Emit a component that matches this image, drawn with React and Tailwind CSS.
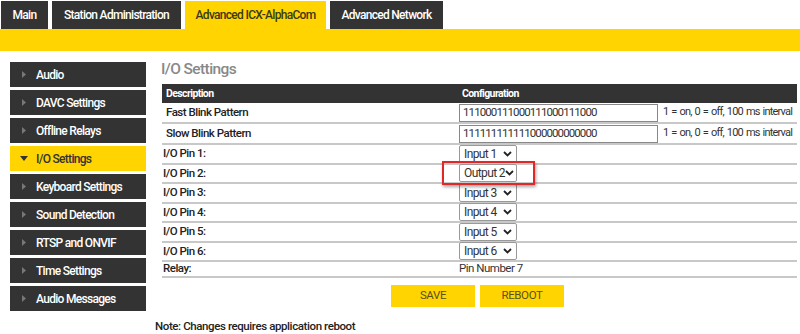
import React from "react";

const tabs = [
  { label: "Main", w: "w-[47px]" },
  { label: "Station Administration", w: "w-[129px]" },
  { label: "Advanced ICX-AlphaCom", w: "w-[141px]", active: true },
  { label: "Advanced Network", w: "w-[113px]" },
];

const side = [
  "Audio",
  "DAVC Settings",
  "Offline Relays",
  "I/O Settings",
  "Keyboard Settings",
  "Sound Detection",
  "RTSP and ONVIF",
  "Time Settings",
  "Audio Messages",
];

function Chevron() {
  return (
    <svg width="9" height="6" viewBox="0 0 9 6" className="ml-auto shrink-0">
      <path d="M1 1 L4.5 4.5 L8 1" fill="none" stroke="#222" strokeWidth="1.8" />
    </svg>
  );
}

function Select({ value, highlight }) {
  const box = (
    <div className="flex items-center w-[58px] h-[18px] border border-[#999] rounded-[2px] bg-white pl-[4px] pr-[4px] text-[12px] tracking-[-0.6px] text-[#333] leading-none whitespace-nowrap">
      <span>{value}</span>
      <Chevron />
    </div>
  );
  if (!highlight) return box;
  return (
    <div className="relative">
      {box}
      <div className="absolute left-[-17px] top-[-3px] w-[93px] h-[24px] border-2 border-[#e02828] shadow-[1px_2px_3px_rgba(0,0,0,0.35)]" />
    </div>
  );
}

export default function App() {
  const pins = ["Input 1", "Output 2", "Input 3", "Input 4", "Input 5", "Input 6"];
  return (
    <div
      className="w-[800px] h-[334px] bg-white overflow-hidden"
      style={{ fontFamily: "Roboto, 'Liberation Sans', sans-serif" }}
    >
      <div className="flex gap-[4px] pl-[1px] pt-[1px] h-[29px]">
        {tabs.map((t) => (
          <div
            key={t.label}
            className={`${t.w} h-[28px] flex items-center justify-center text-[12px] tracking-[-0.7px] font-medium whitespace-nowrap ${
              t.active ? "bg-[#ffd400] text-[#3a3a1a]" : "bg-[#333333] text-white"
            }`}
          >
            {t.label}
          </div>
        ))}
      </div>
      <div className="h-[22px] bg-[#ffd400]" />
      <div className="flex">
        <div className="ml-[10px] mt-[11px] w-[136px] shrink-0 flex flex-col gap-[3px]">
          {side.map((s) => {
            const active = s === "I/O Settings";
            return (
              <div
                key={s}
                className={`h-[25px] flex items-center text-[12px] tracking-[-0.7px] font-medium whitespace-nowrap ${
                  active ? "bg-[#ffd400] text-[#333]" : "bg-[#333333] text-white"
                }`}
              >
                <span className="w-[26px] flex justify-center pl-[2px]">
                  {active ? (
                    <svg width="8" height="5" viewBox="0 0 8 5">
                      <path d="M0 0 L8 0 L4 5 Z" fill="#333" />
                    </svg>
                  ) : (
                    <svg width="4" height="7" viewBox="0 0 4 7">
                      <path d="M0 0 L4 3.5 L0 7 Z" fill="#777" />
                    </svg>
                  )}
                </span>
                <span>{s}</span>
              </div>
            );
          })}
        </div>
        <div className="ml-[9px] w-[642px] shrink-0">
          <div className="text-[15.5px] tracking-[-0.6px] font-medium text-[#888] h-[33px] pl-[6px] pt-[8px] leading-[20px]">I/O Settings</div>
          <div className="ml-[7px] w-[635px] text-[11.5px] tracking-[-0.5px] text-[#222]">
            <div className="flex h-[19px] bg-[#333333] text-white font-bold text-[10.5px] tracking-[-0.6px] items-center">
              <div className="w-[297px] shrink-0 pl-[4px]">Description</div>
              <div className="pl-[3px]">Configuration</div>
            </div>
            {[
              ["Fast Blink Pattern", "111000111000111000111000"],
              ["Slow Blink Pattern", "111111111111000000000000"],
            ].map(([d, v]) => (
              <div key={d} className="flex h-[21px] items-center border-b-2 border-[#c8c8c8]">
                <div className="w-[297px] shrink-0 pl-[4px] font-medium">{d}</div>
                <div className="w-[199px] shrink-0 h-[18px] border border-[#888] pl-[3px] flex items-center text-[#333] tracking-[-0.9px]">{v}</div>
                <div className="pl-[5px] text-[11px] text-[#333] tracking-[-0.8px] [word-spacing:1px] whitespace-nowrap">1 = on, 0 = off, 100 ms interval</div>
              </div>
            ))}
            {pins.map((p, i) => (
              <div key={p} className="flex h-[19.5px] items-center border-b-2 border-[#c8c8c8]">
                <div className="w-[297px] shrink-0 pl-[1px] font-medium">I/O Pin {i + 1}:</div>
                <Select value={p} highlight={i === 1} />
              </div>
            ))}
            <div className="flex h-[16px] items-center border-b-2 border-[#c8c8c8]">
              <div className="w-[297px] shrink-0 pl-[1px] font-medium">Relay:</div>
              <div className="text-[#333]">Pin Number 7</div>
            </div>
            <div className="flex justify-center gap-[5px] mt-[7px] pr-[4px] tracking-[-0.4px]">
              <div className="w-[84px] h-[22px] bg-[#ffd400] flex items-center justify-center text-[11.5px] text-[#5a5020]">SAVE</div>
              <div className="w-[84px] h-[22px] bg-[#ffd400] flex items-center justify-center text-[11.5px] text-[#5a5020]">REBOOT</div>
            </div>
          </div>
          <div className="mt-[11px] text-[11.5px] tracking-[-0.4px] font-medium text-[#222]">Note: Changes requires application reboot</div>
        </div>
      </div>
    </div>
  );
}
